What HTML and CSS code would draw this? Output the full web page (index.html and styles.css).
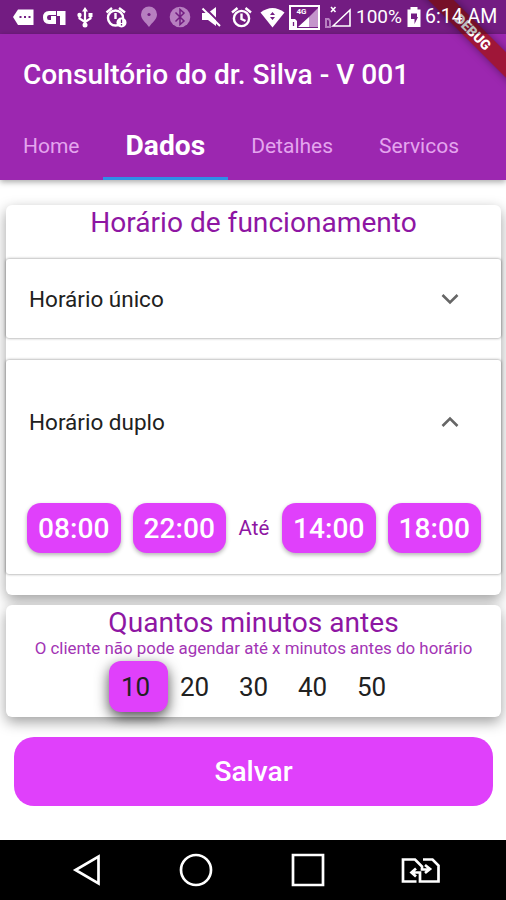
FILE: index.html
```html
<!DOCTYPE html>
<html lang="pt-BR">
<head>
    <meta charset="UTF-8">
    <meta name="viewport" content="width=device-width, initial-scale=1.0">
    <title>Consultório do dr. Silva</title>
    <link rel="stylesheet" href="styles.css">
</head>
<body>
    <div class="app">
        <div class="status-bar">
            <!-- message -->
            <svg width="38" height="34" viewBox="0 0 38 34"><path fill="#fff" d="M13 17l5-7.500h15.500v15.500H18z"/><path fill="#731d82" d="M19.500 16h2v2h-2zM24 16h2v2h-2zM28.500 16h2v2h-2z"/></svg>
            <!-- G1 -->
            <svg width="32" height="34" viewBox="38 0 32 34"><path fill="none" stroke="#fff" stroke-width="4" d="M56 13h-7q-4 0-4 4.500t4 4.500h5v-4h-3"/><path fill="#fff" d="M57 11h8.500v14H60v-9h-3z"/><path stroke="#731d82" d="M57.500 17v8"/></svg>
            <!-- usb -->
            <svg width="30" height="34" viewBox="70 0 30 34"><path fill="none" stroke="#fff" stroke-width="2.200" d="M85 10v15M79.500 14v4.500l5.500 3.500M90.500 14v4.500L85 22"/><path fill="#fff" d="M85 7l3 4.500h-6zM88.500 13h4v4h-4z"/><circle cx="79.500" cy="15" r="2.200" fill="#fff"/><circle cx="85" cy="25" r="2.500" fill="#fff"/></svg>
            <!-- alarm with badge -->
            <svg width="35" height="34" viewBox="100 0 35 34"><g fill="none" stroke="#fff" stroke-width="2.400"><circle cx="115.500" cy="18" r="7.500"/><path d="M106.500 12.500l5.500-4.500M119 8l6 4.500M115.500 13v6"/></g><circle cx="121.500" cy="22.500" r="5" fill="#fff"/><path stroke="#731d82" stroke-width="1.300" d="M121.500 19.500v3.500M121.500 24v1.500"/></svg>
            <!-- location -->
            <svg width="30" height="34" viewBox="135 0 30 34"><path fill="#b77fc0" d="M149 6.500a8 8 0 0 1 8 8c0 5-5 8-8 12.500-3-4.500-8-7.500-8-12.500a8 8 0 0 1 8-8z"/><circle cx="149" cy="14.500" r="1.600" fill="#731d82"/></svg>
            <!-- bluetooth -->
            <svg width="32" height="34" viewBox="165 0 32 34"><circle cx="180" cy="17" r="10.300" fill="#b77fc0"/><path fill="none" stroke="#731d82" stroke-width="1.500" d="M175.500 12.500l8.500 8.500-4 3.500v-15l4 3.500-8.500 8.500"/></svg>
            <!-- muted volume -->
            <svg width="29" height="34" viewBox="197 0 29 34"><path fill="#fff" d="M202 13h6l8-6v19l-8-6h-6z"/><path stroke="#731d82" stroke-width="2" d="M204.500 7.500l16.500 16.500"/><path stroke="#fff" stroke-width="2" d="M202.500 8.500l17.500 17.500"/></svg>
            <!-- alarm -->
            <svg width="32" height="34" viewBox="226 0 32 34"><g fill="none" stroke="#fff" stroke-width="2.400"><circle cx="241.500" cy="18.500" r="7.600"/><path d="M232 12.500l5.500-4.500M245.500 8l5.500 4.500M241.500 13.500v5.500l4 2"/></g></svg>
            <!-- wifi -->
            <svg width="29" height="34" viewBox="258 0 29 34"><path fill="#fff" d="M260.500 12.500q12-9 24 0L272.500 27.500z"/><path fill="#731d82" d="M272.500 12l2.500 3h-5zM272.500 20l2.500-3h-5z"/></svg>
            <!-- 4G signal -->
            <svg width="36" height="34" viewBox="287 0 36 34"><path fill="none" stroke="#fff" stroke-width="2" d="M290 6h29v23h-29z"/><path fill="#fff" d="M298 27l11-10v10zM291 19h4l2 2v7h-6z"/><path fill="#c595cc" d="M309 17l9-9v19h-9z"/><path stroke="#731d82" stroke-width="1.300" d="M293.500 22v4"/><text class="signal-text" x="296.500" y="14">4G</text></svg>
            <!-- second sim -->
            <svg width="31" height="34" viewBox="323 0 31 34"><path fill="none" stroke="#fff" stroke-width="1.600" d="M333 26L350 10v16zM331 7l4.500 5M335.500 7l-4.500 5"/><path fill="none" stroke="#b77fc0" stroke-width="2" d="M326 19h2.500l1.500 2v6h-4z"/></svg>
            <span class="percent">100%</span>
            <svg width="20" height="34" viewBox="404 0 20 34"><path fill="#fff" d="M407.500 9.500h3V7h7v2.500h3V27h-13z"/><path fill="#731d82" d="M411 13.500h6v3.500h1l-3.500 7v-5h-3.500z"/></svg>
            <span class="clock">6:14 AM</span>
        </div>

        <header class="app-bar">
            <h1 class="title">Consultório do dr. Silva - V 001</h1>
            <nav class="tabs">
                <a class="tab">Home</a>
                <a class="tab active">Dados</a>
                <a class="tab">Detalhes</a>
                <a class="tab">Servicos</a>
            </nav>
        </header>

        <main class="content">
            <section class="card hours">
                <h2 class="card-title">Horário de funcionamento</h2>
                <div class="panel">
                    <div class="panel-header">
                        <span>Horário único</span>
                        <svg width="20" height="14" viewBox="0 0 20 14"><path class="chevron" d="M2.500 3l7.500 7.500L17.500 3"/></svg>
                    </div>
                </div>
                <div class="panel open">
                    <div class="panel-header">
                        <span>Horário duplo</span>
                        <svg width="20" height="14" viewBox="0 0 20 14"><path class="chevron" d="M2.500 11L10 3.500l7.500 7.500"/></svg>
                    </div>
                    <div class="times">
                        <button class="time">08:00</button>
                        <button class="time">22:00</button>
                        <span class="until">Até</span>
                        <button class="time">14:00</button>
                        <button class="time">18:00</button>
                    </div>
                </div>
            </section>

            <section class="card minutes">
                <h2 class="card-title">Quantos minutos antes</h2>
                <p class="hint">O cliente não pode agendar até x minutos antes do horário</p>
                <div class="options">
                    <span class="option selected">10</span>
                    <span class="option">20</span>
                    <span class="option">30</span>
                    <span class="option">40</span>
                    <span class="option">50</span>
                </div>
            </section>

            <button class="save">Salvar</button>
        </main>

        <div class="nav-bar">
            <svg width="32" height="36" viewBox="0 0 32 36"><path d="M27.500 4.500v27L4.500 18z"/></svg>
            <svg width="36" height="36" viewBox="0 0 36 36"><circle cx="18" cy="18" r="15"/></svg>
            <svg width="36" height="36" viewBox="0 0 36 36"><path d="M3 3h30v30H3z"/></svg>
            <svg width="42" height="36" viewBox="0 0 42 36"><path d="M17.500 29.500H4V7.500h12l7 7v3h7M26 13l5 4-5 4M24 7.500h9.500l6 6v16H21V20.500h-8M17 16.500l-4.500 4 4.500 4"/></svg>
        </div>

        <div class="debug"><span>DEBUG</span></div>
    </div>
</body>
</html>
```
FILE: styles.css
```css
* {
    box-sizing: border-box;
}

body {
    margin: 0;
    font-family: Roboto, sans-serif;
    background-color: #fff;
}

h1, h2, p {
    margin: 0;
    font-weight: 400;
}

button {
    font-family: inherit;
    border: none;
    padding: 0;
    color: #fff;
    background-color: #e040fb;
}

.app {
    position: relative;
    width: 506px;
    height: 900px;
    display: flex;
    flex-direction: column;
    overflow: hidden;
    background-color: #9c27b0;
}

/* translucent, the debug ribbon shows through it */
.status-bar {
    height: 34px;
    display: flex;
    align-items: center;
    background-color: rgba(0, 0, 0, 0.26);
    color: #fff;
    font-size: 19px;
    line-height: 36px;
    white-space: nowrap;
    z-index: 3;
}

.status-bar svg {
    flex: none;
}

.signal-text {
    font-size: 8px;
    font-weight: 700;
    fill: #fff;
}

.percent {
    width: 50px;
    padding-left: 2px;
}

.clock {
    padding-left: 1px;
    font-size: 19.5px;
}

.app-bar {
    height: 146px;
    flex: none;
    background-color: #9c27b0;
    color: #fff;
    box-shadow: 0 2px 6px rgba(0, 0, 0, 0.35);
    z-index: 1;
}

.title {
    height: 78px;
    padding-left: 23px;
    font-size: 28.1px;
    font-weight: 500;
    line-height: 82px;
    white-space: nowrap;
}

.tabs {
    height: 68px;
    display: flex;
}

.tab {
    flex: none;
    padding: 0 23px;
    line-height: 68px;
    font-size: 21px;
    color: #e4a5ee;
}

.tab.active {
    font-size: 28.2px;
    font-weight: 700;
    color: #fff;
    border-bottom: 3px solid #2f8ee8;
}

.content {
    height: 660px;
    flex: none;
    padding: 25px 5px 0 6px;
    background-color: #fff;
}

.card {
    border-radius: 6px;
    background-color: #fff;
    box-shadow: 0 5px 14px rgba(0, 0, 0, 0.38);
    text-align: center;
}

.hours {
    height: 390px;
}

.card-title {
    height: 54px;
    font-size: 28.1px;
    line-height: 35px;
    color: #8e16a3;
}

.panel {
    height: 79px;
    border-radius: 3px;
    background-color: #fff;
    box-shadow: 0 0 3px rgba(0, 0, 0, 0.5);
}

.panel.open {
    height: 214px;
    margin-top: 22px;
}

.panel-header {
    height: 79px;
    display: flex;
    justify-content: space-between;
    align-items: center;
    padding: 0 41px 0 23px;
    font-size: 22.5px;
    color: #212121;
}

.open .panel-header {
    height: 124px;
}

.chevron {
    fill: none;
    stroke: #666;
    stroke-width: 2.6;
}

.times {
    display: flex;
    align-items: center;
    padding: 19px 20px 0 21px;
    gap: 12px;
}

.time {
    width: 93.5px;
    height: 50px;
    border-radius: 14px;
    font-size: 28.1px;
    font-weight: 500;
    box-shadow: 0 2px 4px rgba(0, 0, 0, 0.3);
}

.until {
    flex: 1;
    font-size: 20.5px;
    color: #8e16a3;
}

.minutes {
    height: 112px;
    margin-top: 10px;
}

.minutes .card-title {
    height: 34px;
    line-height: 36px;
}

.hint {
    height: 22px;
    font-size: 16.9px;
    line-height: 19px;
    color: #a335b5;
    white-space: nowrap;
}

.options {
    display: flex;
    padding-left: 103px;
}

.option {
    width: 59px;
    height: 51px;
    padding-right: 6px;
    font-size: 26px;
    line-height: 52px;
    color: #212121;
}

.option.selected {
    border-radius: 12px;
    background-color: #e040fb;
    box-shadow: 0 5px 14px rgba(0, 0, 0, 0.7);
}

.save {
    display: block;
    width: 479px;
    height: 69px;
    margin: 20px 0 0 8px;
    border-radius: 20px;
    font-size: 28.1px;
    font-weight: 500;
}

.nav-bar {
    height: 60px;
    flex: none;
    display: flex;
    justify-content: space-between;
    align-items: center;
    padding: 0 65px 0 71px;
    background-color: #000;
}

.nav-bar svg {
    fill: none;
    stroke: #fff;
    stroke-width: 2.7;
}

.nav-bar svg:nth-child(2),
.nav-bar svg:nth-child(3) {
    margin-left: 2px;
}

/* debug ribbon over the top right corner */
.debug {
    position: absolute;
    top: 0;
    right: 0;
    width: 90px;
    height: 90px;
    overflow: hidden;
    z-index: 2;
}

.debug span {
    position: absolute;
    top: 23px;
    left: -18px;
    width: 150px;
    height: 18px;
    background-color: rgba(160, 20, 35, 0.85);
    box-shadow: 0 0 8px rgba(0, 0, 0, 0.4);
    color: #fff;
    font-size: 13.8px;
    font-weight: 900;
    line-height: 18px;
    text-align: center;
    transform: rotate(45deg);
}
```
